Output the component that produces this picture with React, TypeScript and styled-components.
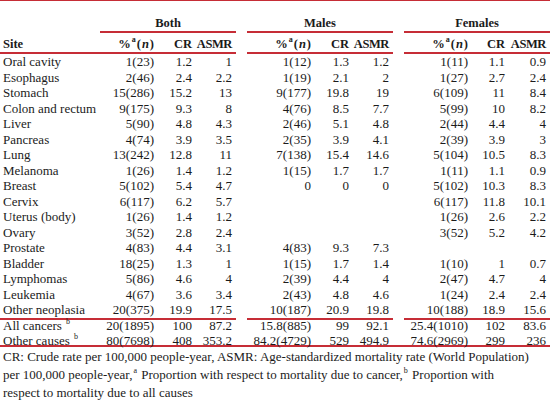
import React from "react";
import styled, { createGlobalStyle, css } from "styled-components";

const RED = "#c62d36";
const INK = "#1b1b1b";

const Global = createGlobalStyle`
  html, body { margin: 0; padding: 0; background: #ffffff; }
  body { font-family: "Liberation Serif", "Times New Roman", serif; color: ${INK}; }
`;

const COLS = "100px 58px 38px 40px 11px 68px 38px 40px 11px 68px 37px 41px";

const Page = styled.div`
  width: 550px;
  height: 403px;
  overflow: hidden;
  border-top: 1px solid ${RED};
  box-sizing: border-box;
  font-size: 13px;
`;

const Row = styled.div<{ $h: number; $full?: boolean; $head?: boolean }>`
  display: grid;
  grid-template-columns: ${COLS};
  height: ${(p) => p.$h}px;
  box-sizing: border-box;
  align-items: end;
  ${(p) =>
    p.$head &&
    css`
      font-size: 12.5px;
      font-weight: 700;
    `}
  ${(p) =>
    p.$full &&
    css`
      border-bottom: 2px solid ${RED};
    `}
`;

type CellProps = {
  $align?: "left" | "right" | "center";
  $rule?: boolean;
  $span?: number;
};

const CellBox = styled.div<CellProps>`
  height: 100%;
  box-sizing: border-box;
  display: flex;
  align-items: flex-end;
  justify-content: ${(p) =>
    p.$align === "left" ? "flex-start" : p.$align === "center" ? "center" : "flex-end"};
  padding: ${(p) => (p.$align === "left" ? "0 0 0 3px" : p.$align === "center" ? "0" : "0 4px 0 0")};
  line-height: 15.5px;
  white-space: nowrap;
  grid-column: ${(p) => (p.$span ? `span ${p.$span}` : "auto")};
  ${(p) =>
    p.$rule &&
    css`
      border-bottom: 2px solid ${RED};
    `}
`;

const Text = styled.span`
  display: block;
`;

const Narrow = styled.span`
  letter-spacing: -0.4px;
`;

function Cell({ children, ...rest }: CellProps & { children?: React.ReactNode }) {
  return (
    <CellBox {...rest}>
      <Text>{children}</Text>
    </CellBox>
  );
}

const Gap = styled.div``;

const Sup = styled.sup`
  font-size: 8px;
  line-height: 0;
  vertical-align: 6px;
  margin: 0 1px;
`;

const N = styled.i`
  font-style: italic;
  margin: 0 1px;
`;

const Notes = styled.div`
  padding: 1px 0 0 3px;
  font-size: 13px;
`;

const NoteLine = styled.div<{ $h: number }>`
  line-height: ${(p) => p.$h}px;
  height: ${(p) => p.$h}px;
  white-space: nowrap;
`;

type R = {
  site: React.ReactNode;
  v: (string | null)[];
};

const rows: R[] = [
  { site: "Oral cavity", v: ["1(23)", "1.2", "1", "1(12)", "1.3", "1.2", "1(11)", "1.1", "0.9"] },
  { site: "Esophagus", v: ["2(46)", "2.4", "2.2", "1(19)", "2.1", "2", "1(27)", "2.7", "2.4"] },
  { site: "Stomach", v: ["15(286)", "15.2", "13", "9(177)", "19.8", "19", "6(109)", "11", "8.4"] },
  { site: "Colon and rectum", v: ["9(175)", "9.3", "8", "4(76)", "8.5", "7.7", "5(99)", "10", "8.2"] },
  { site: "Liver", v: ["5(90)", "4.8", "4.3", "2(46)", "5.1", "4.8", "2(44)", "4.4", "4"] },
  { site: "Pancreas", v: ["4(74)", "3.9", "3.5", "2(35)", "3.9", "4.1", "2(39)", "3.9", "3"] },
  { site: "Lung", v: ["13(242)", "12.8", "11", "7(138)", "15.4", "14.6", "5(104)", "10.5", "8.3"] },
  { site: "Melanoma", v: ["1(26)", "1.4", "1.2", "1(15)", "1.7", "1.7", "1(11)", "1.1", "0.9"] },
  { site: "Breast", v: ["5(102)", "5.4", "4.7", "0", "0", "0", "5(102)", "10.3", "8.3"] },
  { site: "Cervix", v: ["6(117)", "6.2", "5.7", null, null, null, "6(117)", "11.8", "10.1"] },
  { site: "Uterus (body)", v: ["1(26)", "1.4", "1.2", null, null, null, "1(26)", "2.6", "2.2"] },
  { site: "Ovary", v: ["3(52)", "2.8", "2.4", null, null, null, "3(52)", "5.2", "4.2"] },
  { site: "Prostate", v: ["4(83)", "4.4", "3.1", "4(83)", "9.3", "7.3", null, null, null] },
  { site: "Bladder", v: ["18(25)", "1.3", "1", "1(15)", "1.7", "1.4", "1(10)", "1", "0.7"] },
  { site: "Lymphomas", v: ["5(86)", "4.6", "4", "2(39)", "4.4", "4", "2(47)", "4.7", "4"] },
  { site: "Leukemia", v: ["4(67)", "3.6", "3.4", "2(43)", "4.8", "4.6", "1(24)", "2.4", "2.4"] },
  { site: "Other neoplasia", v: ["20(375)", "19.9", "17.5", "10(187)", "20.9", "19.8", "10(188)", "18.9", "15.6"] },
  {
    site: (
      <>
        All cancers <Sup>b</Sup>
      </>
    ),
    v: ["20(1895)", "100", "87.2", "15.8(885)", "99", "92.1", "25.4(1010)", "102", "83.6"],
  },
  {
    site: (
      <>
        Other causes <Sup>b</Sup>
      </>
    ),
    v: ["80(7698)", "408", "353.2", "84.2(4729)", "529", "494.9", "74.6(2969)", "299", "236"],
  },
];

const PctHead = () => (
  <>
    %<Sup>a</Sup>(<N>n</N>)
  </>
);

function DataRow({ r, i }: { r: R; i: number }) {
  const rule = i === 16;
  const last = i === rows.length - 1;
  const g = (k: number) => <Cell $rule={rule}>{r.v[k] ?? ""}</Cell>;
  return (
    <Row $h={last ? 14 : 15.5} $full={last}>
      <Cell $align="left" $rule={rule}>
        {r.site}
      </Cell>
      {g(0)}
      {g(1)}
      {g(2)}
      <Gap />
      {g(3)}
      {g(4)}
      {g(5)}
      <Gap />
      {g(6)}
      {g(7)}
      {g(8)}
    </Row>
  );
}

function GroupHeads() {
  return (
    <>
      <Cell $rule>
        <PctHead />
      </Cell>
      <Cell $rule>CR</Cell>
      <Cell $rule>
        <Narrow>ASMR</Narrow>
      </Cell>
    </>
  );
}

export default function App() {
  return (
    <>
      <Global />
      <Page>
        <Row $h={32} $head>
          <Cell />
          <Cell $span={3} $align="center" $rule>
            Both
          </Cell>
          <Gap />
          <Cell $span={3} $align="center" $rule>
            Males
          </Cell>
          <Gap />
          <Cell $span={3} $align="center" $rule>
            Females
          </Cell>
        </Row>
        <Row $h={21} $head>
          <Cell $align="left" $rule>
            Site
          </Cell>
          <GroupHeads />
          <Gap />
          <GroupHeads />
          <Gap />
          <GroupHeads />
        </Row>
        {rows.map((r, i) => (
          <DataRow key={i} r={r} i={i} />
        ))}
        <Notes>
          <NoteLine $h={17}>
            CR: Crude rate per 100,000 people-year, ASMR: Age-standardized mortality rate (World Population)
          </NoteLine>
          <NoteLine $h={20}>
            per 100,000 people-year,<Sup>a</Sup> Proportion with respect to mortality due to cancer,<Sup>b</Sup> Proportion with
          </NoteLine>
          <NoteLine $h={16}>respect to mortality due to all causes</NoteLine>
        </Notes>
      </Page>
    </>
  );
}
